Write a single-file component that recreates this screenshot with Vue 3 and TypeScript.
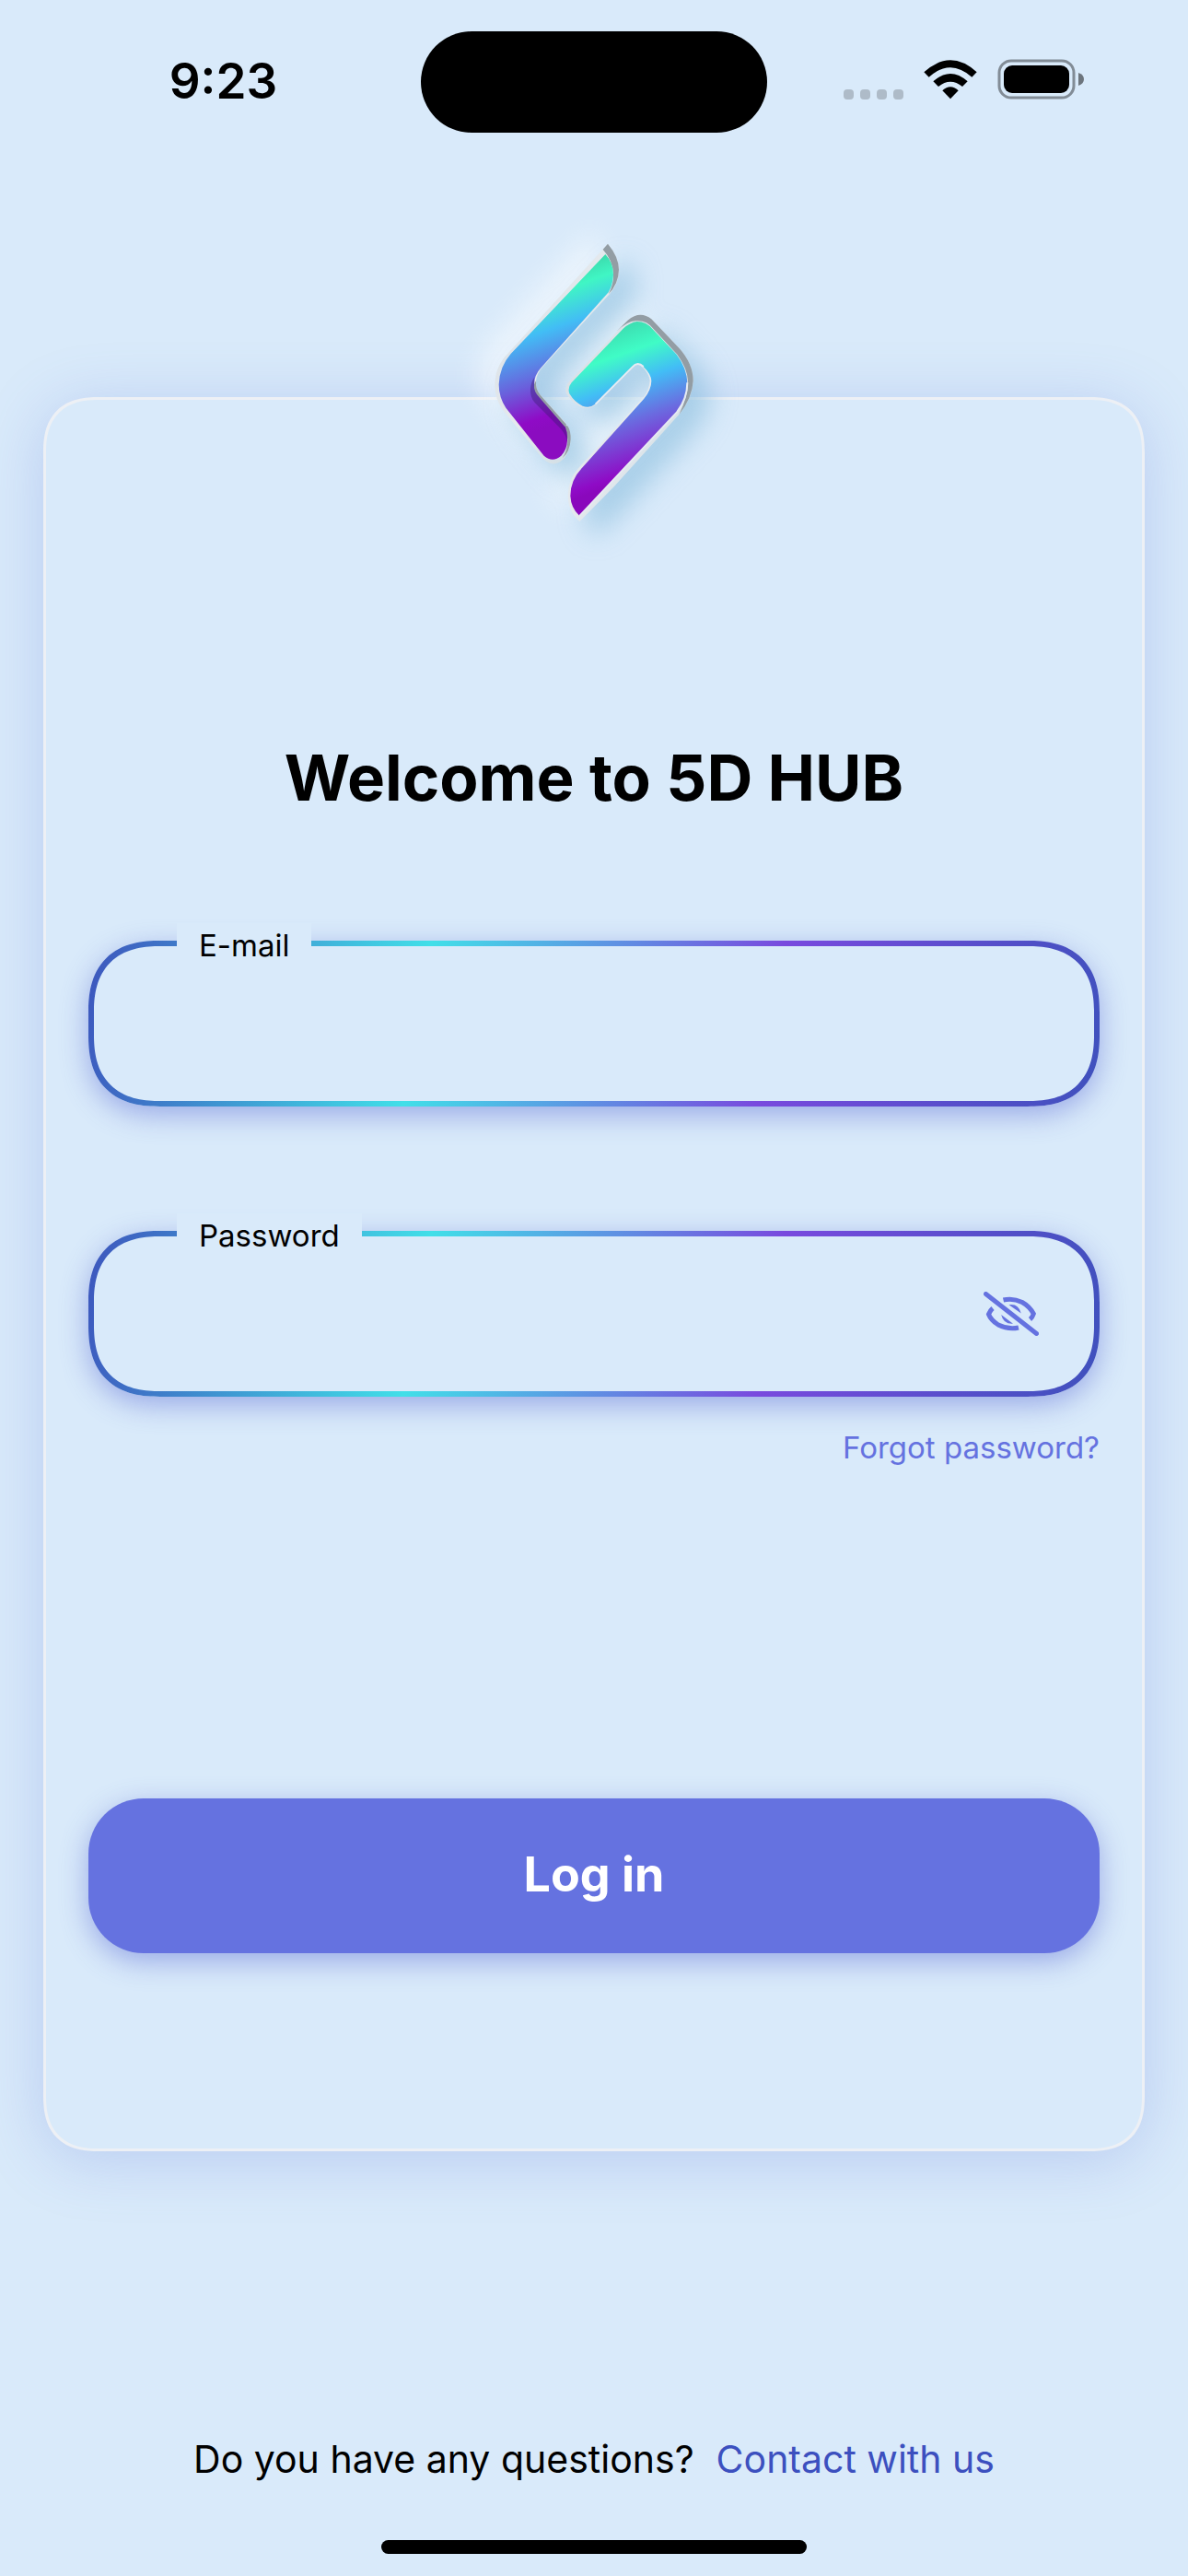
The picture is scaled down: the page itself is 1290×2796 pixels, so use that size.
<script setup lang="ts">
import { ref } from 'vue'

const email = ref('')
const password = ref('')
const passwordVisible = ref(false)
const signalDots = [1, 2, 3, 4]
</script>

<template>
  <div class="screen">
    <header class="status">
      <div class="status-side">
        <time class="clock">9:23</time>
      </div>
      <div class="island"></div>
      <div class="status-side status-icons">
        <div class="dots">
          <span v-for="dot in signalDots" :key="dot" class="dot"></span>
        </div>
        <svg class="wifi" width="58" height="43" viewBox="0 0 174 129" aria-hidden="true">
          <path d="M1 40Q87-38 173 40L157 56Q87-7 17 56Z" />
          <path d="M31 70Q87 20 143 70L126 87Q87 55 48 87Z" />
          <path d="M61 100Q87 76 113 100L87 127Z" />
        </svg>
        <svg class="battery" width="94" height="44" viewBox="0 0 94 44" aria-hidden="true">
          <rect class="battery-case" x="2" y="2" width="81" height="40" rx="13" />
          <rect x="7" y="7" width="71" height="30" rx="9" />
          <path class="battery-cap" d="M88 15Q94 17 94 22Q94 27 88 29Z" />
        </svg>
      </div>
    </header>

    <main class="card">
      <svg class="logo" width="290" height="370" viewBox="0 0 870 1110" role="img" aria-label="5D HUB">
        <defs>
          <linearGradient id="face-left" gradientUnits="userSpaceOnUse" x1="96" y1="273" x2="251" y2="714">
            <stop offset="0" stop-color="#3cdcae" />
            <stop offset=".13" stop-color="#40f6c4" />
            <stop offset=".36" stop-color="#42bdf5" />
            <stop offset=".68" stop-color="#6a60dc" />
            <stop offset=".92" stop-color="#8f0bc6" />
            <stop offset="1" stop-color="#8b0cc0" />
          </linearGradient>
          <linearGradient id="face-right" gradientUnits="userSpaceOnUse" x1="172" y1="489" x2="333" y2="949">
            <stop offset="0" stop-color="#3cdcb0" />
            <stop offset=".19" stop-color="#40fcc6" />
            <stop offset=".39" stop-color="#42bdf6" />
            <stop offset=".63" stop-color="#6a6ce0" />
            <stop offset=".95" stop-color="#8f0bc6" />
            <stop offset="1" stop-color="#8a08bc" />
          </linearGradient>
          <linearGradient id="rim" x1="0" y1="0" x2="1" y2="1">
            <stop offset="0" stop-color="#d3dce3" />
            <stop offset=".5" stop-color="#e6eaee" />
            <stop offset="1" stop-color="#c3d6df" />
          </linearGradient>
          <filter id="halo" x="-40%" y="-40%" width="180%" height="180%">
            <feGaussianBlur stdDeviation="44" />
          </filter>
          <path id="rim-left" d="M480 104L157 458Q112 502 112 565Q112 612 142 650L262 796Q301 842 338 802Q359 776 359 735Q358 708 340 684L260 596Q244 578 246 550Q249 526 266 506L487 266Q515 234 516 188Q515 145 480 104Z" />
          <path id="rim-right" d="M349 558L545 353Q585 320 622 349L712 443Q758 494 758 550Q757 602 717 654L500 895L388 1008Q350 976 350 922Q351 870 388 830L594 606Q615 582 617 550Q615 528 594 506Q577 487 560 506L440 628Q418 648 385 632Q362 619 345 592Q339 576 349 558Z" />
        </defs>
        <g class="halo-light" filter="url(#halo)" transform="translate(-55 -35)">
          <use href="#rim-left" /><use href="#rim-right" />
        </g>
        <g class="halo-blue" filter="url(#halo)" transform="translate(55 50)">
          <use href="#rim-left" /><use href="#rim-right" />
        </g>
        <use href="#rim-left" fill="url(#rim)" />
        <use href="#rim-right" fill="url(#rim)" />
        <path class="edge" d="M464 122L480 104Q515 145 516 188Q515 234 482 268Q500 235 498 200Q496 158 464 122Z" />
        <path class="edge" d="M335 690L350 698Q360 716 359 740Q357 780 332 802Q350 775 349 740Z" />
        <path class="edge" d="M508 389L545 353Q585 320 622 349L712 443Q758 494 758 550Q756 605 712 660Q742 600 741 552Q740 510 706 464L628 380Q606 352 572 355Q548 353 508 389Z" />
        <path fill="url(#face-left)" d="M472 138Q498 165 498 205Q496 240 482 262L262 508Q240 532 240 562Q241 585 262 605L336 690Q350 714 348 745Q347 775 328 794Q300 818 272 794L148 638Q125 604 125 562Q127 504 164 462Z" />
        <path class="shade" d="M240 540Q238 580 262 605L336 690Q350 714 348 750Q346 728 325 704L242 621Q226 603 228 575Q230 554 240 540Z" />
        <path class="edge" d="M246 550Q244 578 260 596L345 692L340 700L258 605Q237 585 240 562Z" />
        <path fill="url(#face-right)" d="M362 556Q348 573 355 592Q372 620 398 632Q422 640 438 626L560 505Q577 486 596 504Q621 528 622 550Q622 580 598 608L395 835Q358 874 358 925Q360 965 388 990L705 652Q739 608 739 556Q737 508 704 464L626 382Q606 357 575 357Q552 360 530 380Z" />
        <path class="shine" d="M440 626L560 505Q577 486 596 504" />
        <path class="shine" d="M388 990L705 652Q739 608 739 556" />
      </svg>

      <h1 class="title">Welcome to 5D HUB</h1>

      <form class="form" @submit.prevent>
        <div class="field">
          <label class="field-label" for="email">E-mail</label>
          <input id="email" v-model="email" class="field-input" type="email" autocomplete="email" />
        </div>
        <div class="field">
          <label class="field-label" for="password">Password</label>
          <input
            id="password"
            v-model="password"
            class="field-input"
            :type="passwordVisible ? 'text' : 'password'"
            autocomplete="current-password"
          />
          <button
            class="eye"
            type="button"
            aria-label="Toggle password visibility"
            @click="passwordVisible = !passwordVisible"
          >
            <svg width="60" height="48" viewBox="0 0 60 48" aria-hidden="true">
              <path class="eye-line" d="M21.500 9Q32 6.500 42 11.500Q50 16 54.300 24Q53 28 50.500 30" />
              <path class="eye-line" d="M10 18Q7 20.500 5.500 24.500Q8 31 16 36Q27 41.500 38 39" />
              <path d="M27.500 14.200Q38 12.500 40.800 23.500Z" />
              <path d="M19.200 25Q21.500 35.500 32 34.800Z" />
              <path class="eye-line" d="M2.500 2.500L57.500 45.500" />
            </svg>
          </button>
        </div>
        <a class="forgot" href="#forgot">Forgot password?</a>
        <button class="submit" type="submit">Log in</button>
      </form>
    </main>

    <footer class="footer">
      <p class="question">
        <span>Do you have any questions?</span>
        <a class="contact" href="#contact">Contact with us</a>
      </p>
      <div class="home-bar"></div>
    </footer>
  </div>
</template>

<style>
body {
  background: #d9eafa;
}
</style>

<style scoped>
.screen {
  display: flex;
  flex-direction: column;
  box-sizing: border-box;
  min-height: 100vh;
  background: #d9eafa;
  color: #000;
  font-family: Inter, "Liberation Sans", sans-serif;
}

.status {
  display: grid;
  grid-template-columns: 1fr 376px 1fr;
  align-items: start;
  padding-top: 34px;
}

.status-side {
  display: flex;
  justify-content: center;
  padding-top: 22px;
}

.clock {
  padding-left: 28px;
  font-size: 53px;
  font-weight: 600;
  line-height: 64px;
}

.island {
  height: 110px;
  border-radius: 55px;
  background: #000;
}

.status-icons {
  align-items: flex-end;
  gap: 22px;
  padding-top: 30px;
  padding-right: 30px;
}

.dots {
  display: flex;
  gap: 7px;
}

.dot {
  width: 11px;
  height: 11px;
  border-radius: 4px;
  background: #aebbc8;
}

.battery-case {
  fill: none;
  stroke: #828c96;
  stroke-width: 3;
}

.battery-cap {
  fill: #6d757d;
}

.card {
  display: flex;
  flex-direction: column;
  align-items: center;
  margin: 287px 47px 0;
  padding: 0 46px 212px;
  border: 3px solid #edf0f5;
  border-radius: 48px;
  background: #d9eafa;
  box-shadow: 0 9px 66px rgba(101, 124, 224, 0.28);
}

.logo {
  margin-top: -204px;
  overflow: visible;
}

.halo-light {
  fill: #fff;
  opacity: 0.5;
}

.halo-blue {
  fill: #85bbdc;
  opacity: 0.6;
}

.edge {
  fill: #939da4;
}

.shade {
  fill: #3a1a70;
  opacity: 0.4;
}

.shine {
  fill: none;
  stroke: #e6ebf2;
  stroke-width: 6;
}

.title {
  margin: 199px 0 0;
  font-size: 69px;
  font-weight: 700;
  line-height: 90px;
  text-align: center;
}

.form {
  display: flex;
  flex-direction: column;
  align-self: stretch;
  margin-top: 132px;
}

.field {
  position: relative;
  display: flex;
  align-items: center;
  box-sizing: border-box;
  height: 180px;
  border: 6px solid transparent;
  border-radius: 66px;
  background:
    linear-gradient(#d9eafa, #d9eafa) padding-box,
    linear-gradient(100deg, #3d55bd 0%, #41dfe8 33%, #794ade 67%, #3f51bd 100%) border-box;
  box-shadow: 0 9px 30px rgba(80, 96, 210, 0.46);
}

/* Continuous corners where the browser can draw them. */
@supports (corner-shape: superellipse(1.3)) {
  .card {
    border-radius: 60px;
    corner-shape: superellipse(1.3);
  }

  .field {
    border-radius: 78px;
    corner-shape: superellipse(1.3);
  }
}

.field + .field {
  margin-top: 135px;
}

.field-label {
  position: absolute;
  top: -25px;
  left: 90px;
  padding: 0 24px;
  background: #d9eafa;
  font-size: 33px;
  line-height: 48px;
}

.field-input {
  flex: 1;
  min-width: 0;
  height: 120px;
  padding: 0 60px;
  border: 0;
  outline: 0;
  background: transparent;
  font: inherit;
  font-size: 42px;
}

.eye {
  display: flex;
  margin-right: 60px;
  padding: 0;
  border: 0;
  background: none;
  cursor: pointer;
}

.eye svg {
  fill: #6572e0;
}

.eye .eye-line {
  fill: none;
  stroke: #6572e0;
  stroke-width: 5;
}

.eye .eye-line:last-child {
  stroke-linecap: round;
}

.forgot {
  align-self: flex-end;
  margin-top: 31px;
  color: #6572e0;
  font-size: 33px;
  line-height: 48px;
  text-decoration: none;
}

.submit {
  height: 168px;
  margin-top: 357px;
  padding: 0 0 3px;
  border: 0;
  border-radius: 60px;
  background: #6572e0;
  box-shadow: 0 9px 30px rgba(80, 96, 210, 0.46);
  color: #fff;
  font-family: inherit;
  font-size: 52px;
  font-weight: 700;
  cursor: pointer;
}

.footer {
  display: flex;
  flex-direction: column;
  align-items: center;
  margin-top: auto;
  padding-bottom: 24px;
}

.question {
  display: flex;
  gap: 24px;
  margin: 0;
  font-size: 41px;
  line-height: 60px;
}

.contact {
  color: #3c50bf;
  text-decoration: none;
}

.home-bar {
  width: 462px;
  height: 15px;
  margin-top: 58px;
  border-radius: 8px;
  background: #000;
}
</style>
